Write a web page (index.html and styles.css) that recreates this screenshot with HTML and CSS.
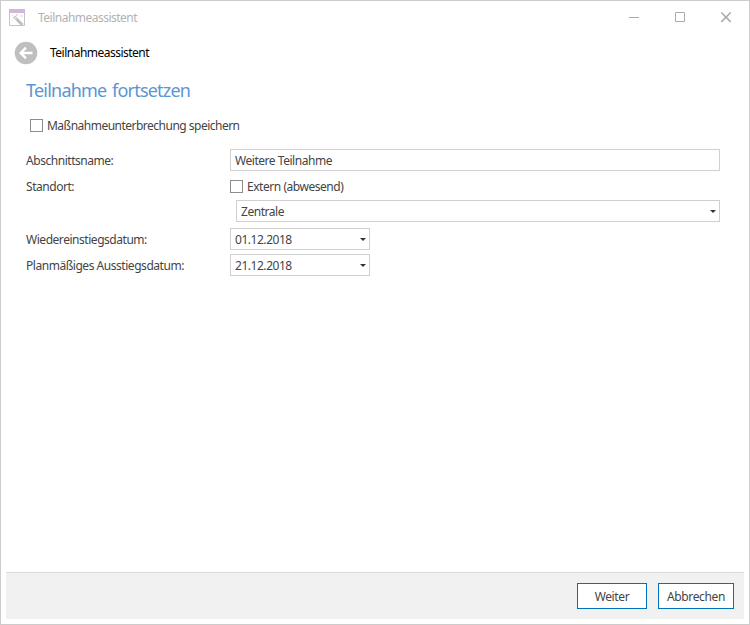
FILE: index.html
```html
<!DOCTYPE html>
<html lang="de">
<head>
<meta charset="utf-8">
<title>Teilnahmeassistent</title>
<link rel="stylesheet" href="styles.css">
</head>
<body>
<div class="window">
  <header class="titlebar">
    <svg class="app-icon" width="16" height="17" viewBox="0 0 16 17">
      <path d="M.5 1v15.500h15V1" fill="#fff" stroke="#c4c4c4"/>
      <path d="M0 0h16v4H0z" fill="#d0b8dc"/>
      <path d="M5 7.500l8.500 8.500" stroke="#c0c0c0" stroke-width="3"/>
      <path d="M5.500 8l2 2" stroke="#e8e8e8" stroke-width="1.500"/>
      <path d="M7 5h2v2H7zM11.500 6h2v2h-2zM3 6h1v1H3zM3 11h1v1H3z" fill="#f5dfc0"/>
    </svg>
    <span class="caption">Teilnahmeassistent</span>
    <div class="controls">
      <svg width="12" height="12" viewBox="0 0 12 12"><path d="M1 5.500h10"/></svg>
      <svg width="12" height="12" viewBox="0 0 12 12"><path d="M1.500 .5h9v9h-9z"/></svg>
      <svg width="12" height="12" viewBox="0 0 12 12"><path class="cross" d="M1.300 .5l9.400 9.400m0-9.400l-9.400 9.400"/></svg>
    </div>
  </header>
  <nav class="nav">
    <svg width="24" height="24" viewBox="0 0 24 24"><circle cx="12" cy="12" r="11.300" fill="#bfbfbf"/><path d="M18.500 12H7m5-5.300L6.700 12l5.300 5.300" fill="none" stroke="#fff" stroke-width="2.400"/></svg>
    <span>Teilnahmeassistent</span>
  </nav>
  <main class="content">
    <h1>Teilnahme fortsetzen</h1>
    <label class="check save"><i class="box"></i><span>Maßnahmeunterbrechung speichern</span></label>
    <div class="form">
      <span class="label">Abschnittsname:</span><div class="field"><span>Weitere Teilnahme</span></div>
      <span class="label">Standort:</span><label class="check extern"><i class="box"></i><span>Extern (abwesend)</span></label>
      <div class="field select site"><span>Zentrale</span></div>
      <span class="label">Wiedereinstiegsdatum:</span><div class="field select date"><span>01.12.2018</span></div>
      <span class="label">Planmäßiges Ausstiegsdatum:</span><div class="field select date"><span>21.12.2018</span></div>
    </div>
  </main>
  <footer class="footer">
    <button class="next">Weiter</button>
    <button class="cancel">Abbrechen</button>
  </footer>
</div>
</body>
</html>
```
FILE: styles.css
```css
* { box-sizing: border-box; }
body { margin: 0; font: 12px/16px "Noto Sans", "Open Sans", sans-serif; letter-spacing: -0.51px; color: #444; white-space: nowrap; }
.window { width: 750px; height: 625px; border: 1px solid #ccc; background: #fff; display: flex; flex-direction: column; padding: 0 5px 5px; }
.titlebar { height: 33px; display: flex; align-items: center; padding: 0 12px 0 3px; color: #b2b2b2; }
.caption { margin-left: 13px; }
.controls { margin-left: auto; display: flex; gap: 34px; }
.controls svg { fill: none; stroke: #aaa; display: block; }
.controls .cross { stroke-width: 1.5; }
.nav { height: 38px; display: flex; align-items: center; padding-left: 8px; gap: 12px; color: #000; }
.content { flex: 1; padding: 6px 24px 0 20px; }
h1 { margin: 0; font-size: 18px; line-height: 24px; font-weight: 400; letter-spacing: -0.78px; word-spacing: 1.6px; color: #5a96d0; }
.check { display: flex; align-items: center; gap: 4px; }
.box { width: 13px; height: 13px; border: 1px solid #8c8c8c; }
.save { margin: 15px 0 0 4px; height: 17px; }
.form { margin-top: 15px; display: grid; grid-template-columns: 204px 490px; grid-template-rows: 22px 21px 24px 22px 22px; row-gap: 4px; align-items: center; letter-spacing: -0.46px; }
.label { padding-top: 2px; }
.extern { padding-top: 2px; }
.field { height: 22px; border: 1px solid #d0d0d0; padding: 2px 4px 0; display: flex; align-items: center; }
.select { justify-content: space-between; padding-right: 3px; }
.select::after { content: ""; margin-top: -2px; border: 3px solid transparent; border-top-color: #333; border-bottom: 0; }
.site { grid-column: 2; margin-left: 6px; align-self: start; }
.date { width: 140px; }
.footer { height: 47px; border-top: 1px solid #dadada; background: #f1f1f1; display: flex; align-items: center; justify-content: flex-end; gap: 11px; padding-right: 10px; }
button { height: 26px; border: 1px solid #0072bc; background: #fff; color: #444; font: inherit; letter-spacing: -0.35px; padding: 2px 0 0; }
.next { width: 70px; }
.cancel { width: 76px; }
```
